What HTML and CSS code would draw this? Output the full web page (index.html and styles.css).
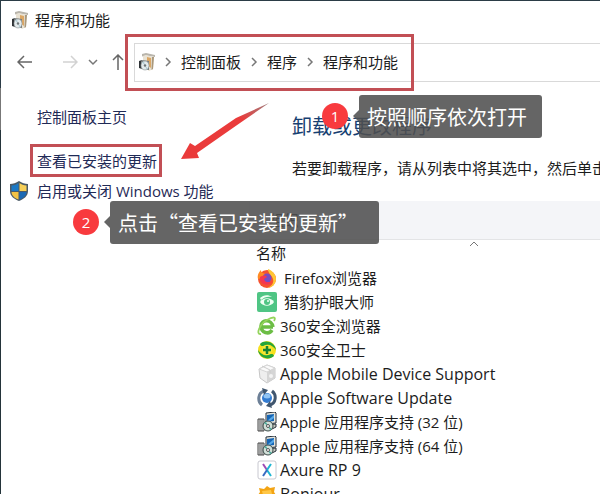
FILE: index.html
```html
<!DOCTYPE html>
<html lang="zh-CN">
<head>
    <meta charset="UTF-8">
    <meta name="viewport" content="width=device-width, initial-scale=1.0">
    <title>程序和功能</title>
    <link rel="stylesheet" href="styles.css">
</head>
<body>
    <!-- programs icon, used in the title and in the address bar -->
    <svg class="defs" width="0" height="0" aria-hidden="true">
        <symbol id="programs" viewBox="0 0 16 18">
            <path d="M3 1l4-1 9 2v2l-9-1.500-4 1z" fill="#b9b5ac"/>
            <path d="M4 3l3-1 8 2-1 12-4 2-6-5z" fill="#e9e2d3"/>
            <path d="M8 4l4 1v10l-4-3z" fill="#dca765"/>
            <path d="M13 4l2 0-1 12-1.500 1z" fill="#a9987c"/>
            <path d="M0 8l3-1v9l-3-1z" fill="#2f3336"/>
            <path d="M2 7l8 1v9l-8-1z" fill="#777b7c"/>
            <ellipse cx="6" cy="12.500" rx="4" ry="4.500" fill="#e3eaec" stroke="#8b9496" stroke-width=".6"/>
            <path d="M6 12.500L3 9.500 5 8.200zM6 12.500l3 3-1.500 1.300z" fill="#b4cdd4"/>
            <circle cx="6" cy="12.500" r="1.200" fill="#6d7476"/>
        </symbol>
        <symbol id="installer" viewBox="0 0 20 20">
            <path d="M9 1l9-1 1 1v10l-10 1z" fill="#e4e4dc" stroke="#26303c"/>
            <path d="M10 3l7-1v7l-7 1z" fill="#1766b5"/>
            <path d="M10 9l7-6v3l-4 3z" fill="#58a9e8"/>
            <path d="M8 13l11-1v3l-4 2H7z" fill="#c4c6bd" stroke="#26303c"/>
            <path d="M1 7h6v12H1z" fill="#e8eaea" stroke="#444"/>
            <path d="M3 7v12M5 7v12" stroke="#555"/>
            <circle cx="11" cy="14" r="5" fill="#d1dfd8" stroke="#3a4a48"/>
            <path d="M11 14L7 11l2-1zM11 14l4 3-2 1z" fill="#45a898"/>
            <circle cx="11" cy="14" r="1.500" fill="#fff" stroke="#555"/>
        </symbol>
        <symbol id="next" viewBox="0 0 8 10">
            <path d="M2 1l4 4-4 4" fill="none" stroke="#777" stroke-width="1.500"/>
        </symbol>
    </svg>

    <div class="window">
        <header class="titlebar">
            <svg class="icon-programs"><use href="#programs"/></svg>
            <span>程序和功能</span>
        </header>

        <div class="navbar">
            <button class="nav-button back" type="button" aria-label="返回">
                <svg width="16" height="14" viewBox="0 0 16 14"><path d="M15 7H1M7 1L1 7l6 6" fill="none" stroke="#666" stroke-width="1.500"/></svg>
            </button>
            <button class="nav-button forward" type="button" aria-label="前进" disabled>
                <svg width="16" height="14" viewBox="0 0 16 14"><path d="M1 7h14M9 1l6 6-6 6" fill="none" stroke="#d2d2d2" stroke-width="1.500"/></svg>
            </button>
            <button class="nav-button recent" type="button" aria-label="最近浏览的位置">
                <svg width="10" height="8" viewBox="0 0 10 8"><path d="M1 2l4 4 4-4" fill="none" stroke="#777" stroke-width="1.500"/></svg>
            </button>
            <button class="nav-button up" type="button" aria-label="上移">
                <svg width="12" height="16" viewBox="0 0 12 16"><path d="M6 16V1M1 6l5-5 5 5" fill="none" stroke="#666" stroke-width="1.500"/></svg>
            </button>
            <nav class="address">
                <svg class="icon-programs"><use href="#programs"/></svg>
                <svg class="next"><use href="#next"/></svg>
                <a href="#">控制面板</a>
                <svg class="next"><use href="#next"/></svg>
                <a href="#">程序</a>
                <svg class="next"><use href="#next"/></svg>
                <a href="#">程序和功能</a>
            </nav>
        </div>

        <div class="content">
            <aside class="sidebar">
                <a class="home" href="#">控制面板主页</a>
                <a class="updates" href="#">查看已安装的更新</a>
                <a class="features" href="#">
                    <svg class="shield" viewBox="0 0 18 20">
                        <path d="M9 0c3 2 6 3 9 3v7c0 5-4 8-9 10-5-2-9-5-9-10V3c3 0 6-1 9-3z" fill="#4b5a66"/>
                        <path d="M8.500 2v8H1.500V4.500c3 0 5-1 7-2.500z" fill="#1b78c4"/>
                        <path d="M9.500 2v8h7V4.500c-3 0-5-1-7-2.500z" fill="#f6cf58"/>
                        <path d="M8.500 11v7.500c-4-1.500-7-4-7-7.500z" fill="#f2c244"/>
                        <path d="M9.500 11v7.500c4-1.500 7-4 7-7.500z" fill="#1b69b4"/>
                    </svg>
                    <span>启用或关闭 Windows 功能</span>
                </a>
            </aside>

            <main class="main">
                <h1>卸载或更改程序</h1>
                <p class="description">若要卸载程序，请从列表中将其选中，然后单击“卸载”、“更改”或“修复”。</p>
                <div class="toolbar">
                    <button type="button">组织</button>
                </div>
                <table class="programs">
                    <thead>
                        <tr>
                            <th>名称
                                <svg class="sort" viewBox="0 0 10 6"><path d="M1 5l4-4 4 4" fill="none" stroke="#777"/></svg>
                            </th>
                        </tr>
                    </thead>
                    <tbody>
                        <tr><td class="spaced"><svg viewBox="0 0 20 20">
                            <circle cx="10" cy="11" r="9" fill="#f5522f"/>
                            <path d="M11 1c5 2 8 6 8 10 0 5-4 9-9 9 5-2 7-5 6-9-1-4-5-5-5-10z" fill="#ffc634"/>
                            <path d="M1 11C0 7 2 4 4 2c0 3 2 3 5 4l-4 4z" fill="#ff8a24"/>
                            <circle cx="10" cy="10" r="4.500" fill="#764ec2"/>
                            <path d="M3 9c3-2 6-2 7 0l-3 2c1 4 5 4 8 2-2 5-10 5-12-1z" fill="#f5384f"/>
                        </svg><span>Firefox浏览器</span></td></tr>
                        <tr><td class="spaced"><svg viewBox="0 0 20 20">
                            <rect width="20" height="20" rx="2" fill="#4fc584"/>
                            <path d="M3 10c3-5 11-5 14 0-3 5-11 5-14 0z" fill="#effff3"/>
                            <path d="M3 6c3-3 8-4 12-1-4-1-8 0-11 3z" fill="#effff3"/>
                            <circle cx="10" cy="10" r="3" fill="#4fc584"/>
                            <circle cx="11" cy="9" r="1" fill="#effff3"/>
                        </svg><span>猎豹护眼大师</span></td></tr>
                        <tr><td><svg viewBox="0 0 20 20">
                            <path d="M16 11H5M15 14c-3 5-11 3-11-4s11-7 12 1" fill="none" stroke="#6cbd45" stroke-width="3.500"/>
                            <path d="M4 18C-2 19 3 8 10 4c5-3 10-4 7 1" fill="none" stroke="#94d45c" stroke-width="1.800"/>
                        </svg><span>360安全浏览器</span></td></tr>
                        <tr><td><svg viewBox="0 0 20 20">
                            <circle cx="10" cy="10" r="9" fill="#f6e01d"/>
                            <path d="M3 4c5-5 15-2 16 6-3-4-6-6-10-5-3 1-5 2-6-1z" fill="#26a53b"/>
                            <path d="M17 16c-5 5-15 2-16-6 3 4 6 6 10 5 3-1 5-2 6 1z" fill="#26a53b"/>
                            <circle cx="10" cy="10" r="5" fill="#f7e83b"/>
                            <path d="M10 6v8M6 10h8" stroke="#168333" stroke-width="2.500"/>
                        </svg><span>360安全卫士</span></td></tr>
                        <tr class="latin"><td><svg viewBox="0 0 20 20">
                            <path d="M2 5l8-4 8 3v10l-8 5-7-5z" fill="#eee" stroke="#c6c6c6"/>
                            <path d="M2 5l8 3 8-4-8-3z" fill="#fafafa" stroke="#d5d5d5"/>
                            <path d="M10 8v11l8-5V4z" fill="#d5d5d5"/>
                            <path d="M5 2l8 4v3" fill="none" stroke="#ccc"/>
                            <circle cx="14" cy="12" r="2" fill="#f3f3f3"/>
                        </svg><span>Apple Mobile Device Support</span></td></tr>
                        <tr class="latin"><td><svg viewBox="0 0 20 20">
                            <circle cx="10" cy="10" r="5" fill="#327bd1"/>
                            <ellipse cx="10" cy="8" rx="3.500" ry="2.500" fill="#91c4f3"/>
                            <path d="M5 17C0 13 1 5 7 3" fill="none" stroke="#6d8097" stroke-width="3"/>
                            <path d="M15 3c5 4 4 12-2 14" fill="none" stroke="#40566f" stroke-width="3"/>
                            <path d="M5 0l6 2-4 5zM15 20l-6-2 4-5z" fill="#40566f"/>
                        </svg><span>Apple Software Update</span></td></tr>
                        <tr><td><svg><use href="#installer"/></svg><span>Apple 应用程序支持 (32 位)</span></td></tr>
                        <tr><td><svg><use href="#installer"/></svg><span>Apple 应用程序支持 (64 位)</span></td></tr>
                        <tr class="latin"><td><svg viewBox="0 0 20 20">
                            <rect x="1" y="1" width="18" height="18" rx="2" fill="#fff" stroke="#c8c8d0"/>
                            <path d="M6 4l4 6" fill="none" stroke="#9d4bb5" stroke-width="2"/>
                            <path d="M14 4l-4 6 4 6" fill="none" stroke="#20b6d3" stroke-width="2"/>
                            <path d="M10 10l-4 6" stroke="#386ac2" stroke-width="2"/>
                        </svg><span>Axure RP 9</span></td></tr>
                        <tr class="latin"><td><svg viewBox="0 0 20 20">
                            <path d="M2 4l5 1 3-3 3 2 5-1-1 5 2 3-3 3v5l-6-2-5 2-1-5-3-3 2-3z" fill="#f3a414"/>
                            <path d="M5 7l9-1 1 4-9 1z" fill="#ffc747"/>
                        </svg><span>Bonjour</span></td></tr>
                    </tbody>
                </table>
            </main>
        </div>
    </div>

    <!-- steps drawn over the window -->
    <div class="frame frame-address"></div>
    <div class="frame frame-updates"></div>
    <svg class="arrow" viewBox="0 0 90 58" aria-hidden="true">
        <linearGradient id="fade" x1="0" y1="1" x2="1" y2="0">
            <stop offset="0.700" stop-color="#ea3b3b"/>
            <stop offset="1" stop-color="#a08080"/>
        </linearGradient>
        <path d="M89 0L56 15 15 43 10 40 1 56l18-1-2-5L60 20z" fill="url(#fade)"/>
    </svg>
    <span class="badge badge-one">1</span>
    <div class="tip tip-one">按照顺序依次打开</div>
    <span class="badge badge-two">2</span>
    <div class="tip tip-two">点击“查看已安装的更新”</div>
</body>
</html>
```
FILE: styles.css
```css
* {
    box-sizing: border-box;
}

body {
    position: relative;
    height: 100vh;
    margin: 0;
    overflow: hidden;
    font-family: "Open Sans", "Noto Sans CJK SC", sans-serif;
    font-size: 15px;
    line-height: 24px;
    color: #1c1c1c;
    background: linear-gradient(#2b3c46 88px, #777 88px, #777 130px, #24343a 130px);
}

a {
    color: inherit;
    text-decoration: none;
}

button {
    padding: 0;
    border: 0;
    background: none;
    font: inherit;
    color: inherit;
}

svg {
    display: block;
    flex: none;
}

.defs {
    position: absolute;
}

.window {
    margin: 1px 0 0 1px;
    background: #fff;
}

.titlebar {
    display: flex;
    align-items: center;
    gap: 7px;
    height: 37px;
    padding-left: 11px;
}

.icon-programs {
    width: 16px;
    height: 18px;
}

.navbar {
    display: flex;
    align-items: center;
    height: 48px;
    padding-left: 14px;
}

.nav-button {
    display: flex;
    justify-content: center;
    width: 20px;
}

.back {
    margin-right: 25px;
}

.forward {
    margin-right: 3px;
}

.recent {
    margin-right: 5px;
}

.up {
    margin-right: 6px;
}

.address {
    display: flex;
    flex: 1;
    align-items: center;
    gap: 9px;
    height: 39px;
    padding-left: 4px;
    border: 1px solid #d9d9d9;
    border-right: 0;
}

.next {
    width: 8px;
    height: 10px;
}

.content {
    display: grid;
    grid-template-columns: 248px 1fr;
    padding-top: 19px;
}

.sidebar {
    display: flex;
    flex-direction: column;
    color: #1f2a56;
}

.sidebar .home,
.sidebar .updates {
    margin-left: 36px;
}

.sidebar .updates {
    margin-top: 20px;
}

.sidebar .features {
    display: flex;
    align-items: center;
    gap: 9px;
    margin: 6px 0 0 9px;
}

.shield {
    width: 18px;
    height: 20px;
}

.main {
    min-width: 0;
    white-space: nowrap;
}

h1 {
    margin: 8px 0 0 43px;
    font-size: 20px;
    font-weight: normal;
    line-height: 28px;
    color: #173f72;
}

.description {
    margin: 15px 0 0 43px;
    overflow: hidden;
}

.toolbar {
    height: 39px;
    margin-top: 21px;
    padding: 7px 0 0 20px;
    border-bottom: 1px solid #e3e4e6;
    background: #f4f5f8;
}

.programs {
    width: 100%;
    border-collapse: collapse;
}

.programs th {
    position: relative;
    padding: 1px 0 1px 7px;
    font-weight: normal;
    text-align: left;
}

.sort {
    position: absolute;
    top: 1px;
    left: 220px;
    width: 10px;
    height: 6px;
}

.programs td {
    display: flex;
    align-items: center;
    gap: 3px;
    padding: 0 0 0 8px;
}

.programs td.spaced {
    gap: 7px;
}

.programs .latin {
    font-size: 16px;
}

.programs td svg {
    width: 20px;
    height: 20px;
}

.frame {
    position: absolute;
    border: 3px solid #c24f55;
}

.frame-address {
    top: 34px;
    left: 125px;
    width: 289px;
    height: 57px;
}

.frame-updates {
    top: 144px;
    left: 30px;
    width: 132px;
    height: 33px;
}

.arrow {
    position: absolute;
    top: 103px;
    left: 180px;
    width: 90px;
    height: 58px;
}

.badge {
    position: absolute;
    width: 26px;
    height: 26px;
    border-radius: 50%;
    background: #f83a3e;
    color: #fff;
    line-height: 26px;
    text-align: center;
}

.badge-one {
    top: 103px;
    left: 322px;
}

.badge-two {
    top: 209px;
    left: 73px;
}

.tip {
    position: absolute;
    height: 43px;
    padding-left: 8px;
    border-radius: 3px;
    background: rgba(80, 80, 80, 0.88);
    color: #fff;
    font-family: "Noto Sans CJK SC", sans-serif;
    font-size: 20px;
    line-height: 43px;
    white-space: nowrap;
}

.tip::before {
    content: "";
    position: absolute;
    top: 15px;
    right: 100%;
    border: 6px solid transparent;
    border-left: 0;
    border-right-color: rgba(80, 80, 80, 0.88);
}

.tip-one {
    top: 95px;
    left: 359px;
    width: 183px;
}

.tip-two {
    top: 201px;
    left: 110px;
    width: 269px;
}
```
